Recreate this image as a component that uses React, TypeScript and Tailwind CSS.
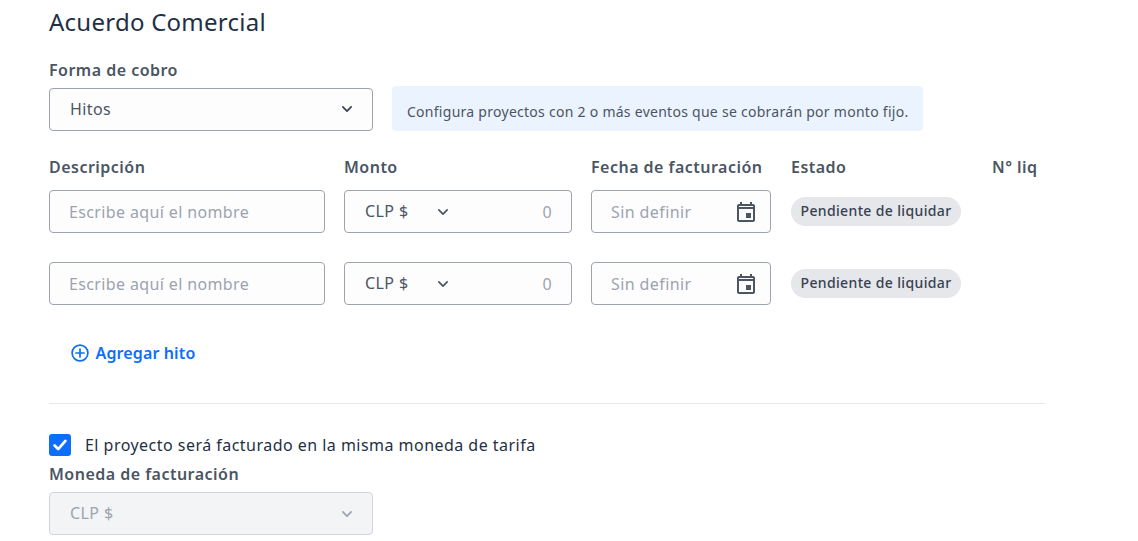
import React from "react";

const Chevron = ({ className = "" }: { className?: string }) => (
  <svg viewBox="0 0 24 24" width="20" height="20" fill="none" stroke="currentColor" strokeWidth="2" strokeLinecap="round" strokeLinejoin="round" className={className}>
    <path d="M7 9.5l5 5 5-5" />
  </svg>
);

const Calendar = () => (
  <svg viewBox="0 0 24 24" width="24" height="24" fill="#4b5563">
    <path d="M19 4h-1V2h-2v2H8V2H6v2H5c-1.1 0-2 .9-2 2v14c0 1.1.9 2 2 2h14c1.1 0 2-.9 2-2V6c0-1.100-.9-2-2-2zm0 16H5V9h14v11zM5 7V6h14v1H5zm7 6h5v5h-5v-5z" />
  </svg>
);

const Row = () => (
  <div className="flex items-start gap-[19px]">
    <div className="flex h-[43px] w-[276px] items-center rounded border border-[#9ca3af] bg-[#fdfdfe] pl-[19px] text-[16px] tracking-[0.37px] text-[#9ca3af]">
      Escribe aquí el nombre
    </div>
    <div className="flex h-[43px] w-[228px] items-center rounded border border-[#9ca3af] bg-[#fdfdfe] pl-5 pr-[19px] text-[16px] tracking-[0.4px]">
      <span className="w-[68px] pb-px text-[#4b5563]">CLP $</span>
      <Chevron className="text-[#4b5563]" />
      <span className="flex-1 text-right text-[#9ca3af]">0</span>
    </div>
    <div className="flex h-[43px] w-[180px] items-center justify-between rounded border border-[#9ca3af] bg-[#fdfdfe] pl-[19px] pr-3 text-[16px] tracking-[0.4px] text-[#9ca3af]">
      Sin definir
      <Calendar />
    </div>
    <div className="ml-px mt-[7px] flex h-[29px] items-center rounded-full bg-[#e5e7eb] px-[9.5px] pb-[2px] text-[14px] font-medium tracking-[0.36px] text-[#374151]">
      Pendiente de liquidar
    </div>
  </div>
);

export default function App() {
  return (
    <div className="h-[541px] overflow-hidden bg-white pl-[49px] [font-family:'Noto_Sans',sans-serif]">
      <h1 className="pt-[6px] text-[24px] leading-[32px] tracking-[0.25px] text-[#1f3044]">Acuerdo Comercial</h1>
      <div className="mt-[20px] text-[16px] leading-[24px] font-semibold tracking-[0.48px] text-[#4b5563]">Forma de cobro</div>
      <div className="mt-[6px] flex items-start gap-[19px]">
        <div className="flex h-[43px] w-[324px] items-center justify-between rounded border border-[#9ca3af] bg-[#fdfdfe] pl-5 pr-[15px] pb-px text-[16px] tracking-[0.4px] text-[#4b5563]">
          Hitos
          <Chevron className="text-[#374151]" />
        </div>
        <div className="-mt-[2px] flex h-[45px] w-[531px] items-center rounded bg-[#ebf3fe] pl-[15px] pt-[5px] text-[14px] tracking-[0.27px] text-[#4b5563]">
          Configura proyectos con 2 o más eventos que se cobrarán por monto fijo.
        </div>
      </div>
      <div className="mt-[24px] flex text-[16px] leading-[24px] font-semibold tracking-[0.48px] text-[#4b5563]">
        <div className="w-[295px]">Descripción</div>
        <div className="w-[247px]">Monto</div>
        <div className="w-[200px]">Fecha de facturación</div>
        <div className="w-[201px]">Estado</div>
        <div>N° liq</div>
      </div>
      <div className="mt-[11px] flex flex-col gap-[29px]">
        <Row />
        <Row />
      </div>
      <div className="mt-[36px] ml-[21px] flex items-center gap-[5.5px] text-[16px] leading-[24px] font-semibold tracking-[0.13px] text-[#0d6efd]">
        <svg viewBox="0 0 20 20" width="20" height="20" fill="none" stroke="currentColor" strokeWidth="1.7" strokeLinecap="round">
          <circle cx="10" cy="10" r="7.9" />
          <path d="M10 6v8M6 10h8" />
        </svg>
        Agregar hito
      </div>
      <div className="mt-[38px] h-px w-[996px] bg-[#e5e7eb]" />
      <div className="mt-[30px] flex items-center gap-[14px]">
        <div className="flex h-[22px] w-[22px] items-center justify-center rounded-[3px] bg-[#0d6efd]">
          <svg viewBox="0 0 20 20" width="18" height="18" fill="none" stroke="white" strokeWidth="3" strokeLinecap="round" strokeLinejoin="round">
            <path d="M4 10.500l4 4 8-9" />
          </svg>
        </div>
        <span className="text-[16px] leading-[22px] tracking-[0.47px] text-[#1f3044]">El proyecto será facturado en la misma moneda de tarifa</span>
      </div>
      <div className="mt-[6px] text-[16px] leading-[24px] font-semibold tracking-[0.48px] text-[#4b5563]">Moneda de facturación</div>
      <div className="mt-[6px] flex h-[43px] w-[324px] items-center justify-between rounded border border-[#d1d5db] bg-[#f3f4f6] pl-5 pr-[15px] pb-[2px] text-[16px] tracking-[0.4px] text-[#9ca3af]">
        CLP $
        <Chevron className="mt-[2px] text-[#9ca3af]" />
      </div>
    </div>
  );
}
